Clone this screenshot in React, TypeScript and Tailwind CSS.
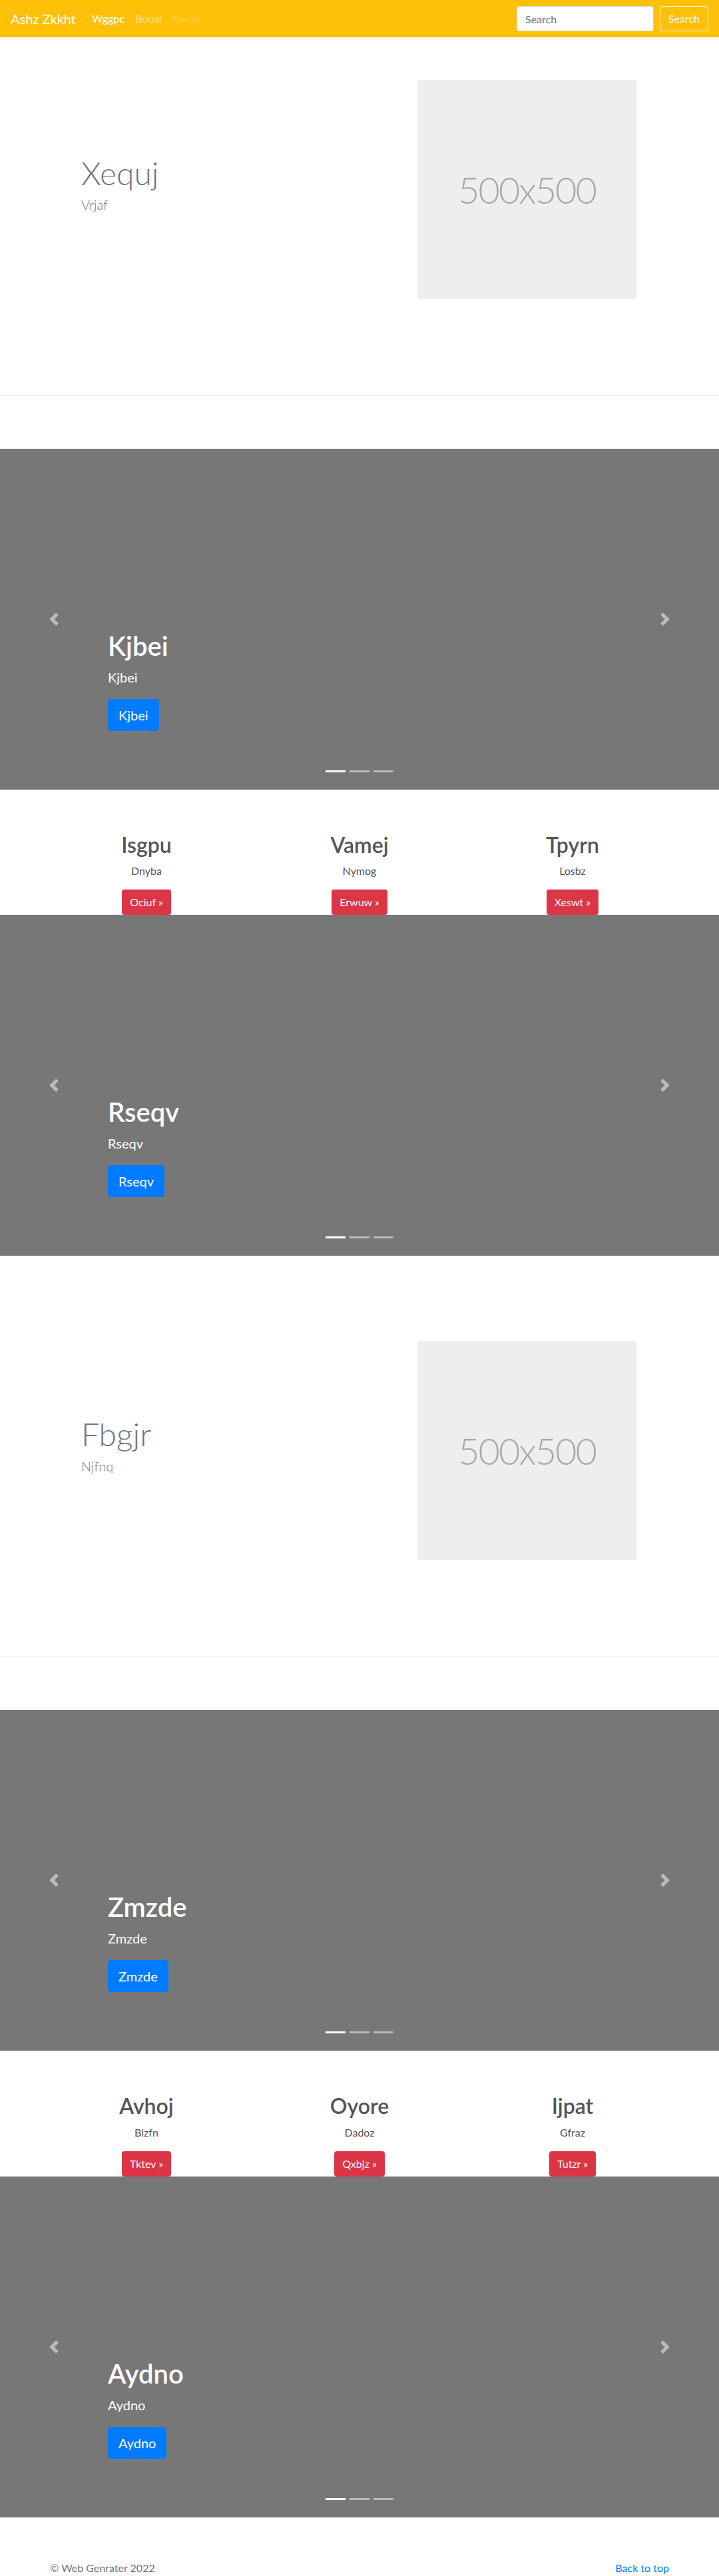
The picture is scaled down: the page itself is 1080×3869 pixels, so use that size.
import React from "react";

function Prev() {
  return (
    <svg width="20" height="20" viewBox="0 0 8 8" fill="#fff" className="opacity-50">
      <path d="M5.25 0l-4 4 4 4 1.5-1.5L4.25 4l2.5-2.5L5.25 0z" />
    </svg>
  );
}

function Next() {
  return (
    <svg width="20" height="20" viewBox="0 0 8 8" fill="#fff" className="opacity-50">
      <path d="M2.75 0l-1.5 1.5L3.75 4l-2.5 2.5L2.75 8l4-4-4-4z" />
    </svg>
  );
}

function Carousel({ title }: { title: string }) {
  return (
    <div className="relative h-[512px] bg-[#777777] flex flex-col justify-end pl-[162px] pb-[88px]">
      <h1 className="text-[40px] leading-[1.2] font-semibold text-white mb-2">{title}</h1>
      <p className="text-[20px] leading-[30px] text-white mb-[18px]">{title}</p>
      <div>
        <a className="inline-flex items-center h-[48px] px-4 rounded-[5px] bg-[#007bff] text-white text-[20px] leading-[30px]">
          {title}
        </a>
      </div>
      <div className="absolute left-[71px] top-1/2 -translate-y-1/2 w-5 h-5">
        <Prev />
      </div>
      <div className="absolute right-[71px] top-1/2 -translate-y-1/2 w-5 h-5">
        <Next />
      </div>
      <div className="absolute left-0 right-0 bottom-[26px] flex justify-center gap-[6px]">
        <span className="block w-[30px] h-[3px] bg-white" />
        <span className="block w-[30px] h-[3px] bg-white/50" />
        <span className="block w-[30px] h-[3px] bg-white/50" />
      </div>
    </div>
  );
}

function Hero({ title, sub, top }: { title: string; sub: string; top?: boolean }) {
  return (
    <div className={top ? "" : "mt-[64px]"}>
      <section className="pt-[64px] pb-[144px] flex items-center">
        <div className="w-[627px] pl-[122px]">
          <h1 className="text-[48px] leading-[1.2] font-light text-[#6c757d] mb-1">{title}</h1>
          <p className="text-[20px] leading-[30px] font-light text-[#6c757d] mb-4">{sub}</p>
        </div>
        <div className="w-[329px] h-[329px] bg-[#eeeeee] flex items-center justify-center text-[56px] font-light text-[#aaaaaa] tracking-[-2px]">
          500x500
        </div>
      </section>
      <div className="h-px bg-[#e6e6e6] mb-[80px]" />
    </div>
  );
}

function Features({ items }: { items: [string, string, string][] }) {
  return (
    <section className="pt-[64px] flex justify-center">
      <div className="w-[960px] grid grid-cols-3">
        {items.map(([h, p, b]) => (
          <div key={h} className="flex flex-col items-center">
            <h2 className="text-[32px] leading-[1.2] font-semibold text-[#555555] mb-2">{h}</h2>
            <p className="text-[16px] leading-6 text-[#555555] mb-4">{p}</p>
            <a className="inline-flex items-center h-[38px] px-3 rounded bg-[#dc3545] text-white text-[16px]">
              {b} »
            </a>
          </div>
        ))}
      </div>
    </section>
  );
}

export default function App() {
  return (
    <div className="font-['Lato',sans-serif] bg-white w-[1080px]">
      <nav className="h-[56px] bg-[#ffc107] flex items-center pl-[16px] pr-[16px]">
        <span className="text-[20px] leading-[30px] text-white mr-4">Ashz Zkkht</span>
        <a className="px-2 text-[16px] leading-6 text-white">Wggpc</a>
        <a className="px-2 text-[16px] leading-6 text-white/50">Bouai</a>
        <a className="px-2 text-[16px] leading-6 text-white/25">Qvcix</a>
        <div className="ml-auto flex items-center">
          <input
            placeholder="Search"
            className="w-[206px] h-[38px] rounded border border-[#ced4da] bg-white px-3 text-[16px] text-[#495057] placeholder:text-[#6c757d] mr-[9px] outline-none"
          />
          <button className="h-[38px] w-[73px] rounded border border-[#f8f9fa] text-[#f8f9fa] text-[16px]">
            Search
          </button>
        </div>
      </nav>

      <Hero title="Xequj" sub="Vrjaf" top />
      <Carousel title="Kjbei" />
      <Features
        items={[
          ["Isgpu", "Dnyba", "Ociuf"],
          ["Vamej", "Nymog", "Erwuw"],
          ["Tpyrn", "Losbz", "Xeswt"],
        ]}
      />
      <Carousel title="Rseqv" />
      <Hero title="Fbgjr" sub="Njfnq" />
      <Carousel title="Zmzde" />
      <Features
        items={[
          ["Avhoj", "Bizfn", "Tktev"],
          ["Oyore", "Dadoz", "Qxbjz"],
          ["Ijpat", "Gfraz", "Tutzr"],
        ]}
      />
      <Carousel title="Aydno" />

      <footer className="pt-[64px] flex justify-center">
        <div className="w-[930px] flex justify-between text-[16px] leading-6">
          <p className="text-[#6c757d]">© Web Genrater 2022</p>
          <a className="text-[#007bff]">Back to top</a>
        </div>
      </footer>
    </div>
  );
}
